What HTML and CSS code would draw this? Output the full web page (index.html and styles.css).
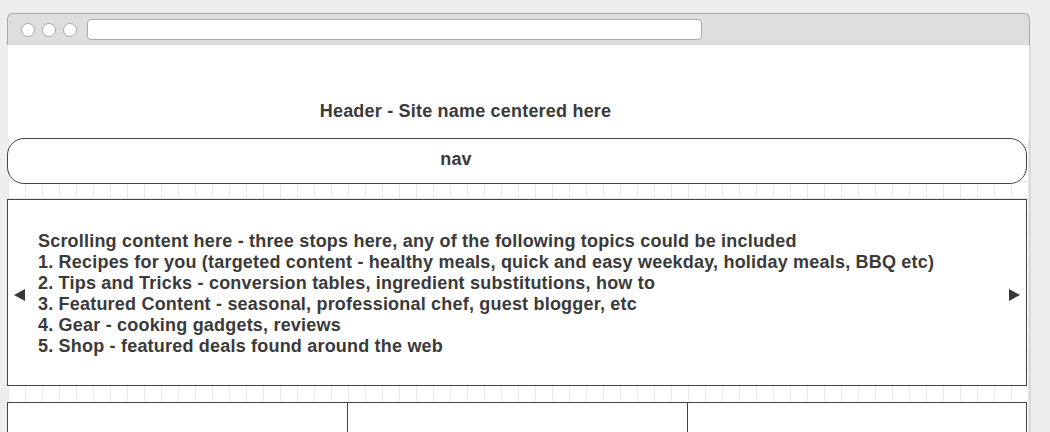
FILE: index.html
```html
<!DOCTYPE html>
<html>
<head>
<meta charset="utf-8">
<link rel="stylesheet" href="styles.css">
</head>
<body>
<div class="window">
  <div class="titlebar">
    <span class="dot"></span><span class="dot"></span><span class="dot"></span>
    <div class="address"></div>
  </div>
  <div class="page">
    <header class="site-header">Header - Site name centered here</header>
    <nav class="nav">nav</nav>
    <section class="carousel">
      <span class="arrow arrow-left"></span>
      <div class="slide">
        Scrolling content here - three stops here, any of the following topics could be included<br>
        1. Recipes for you (targeted content - healthy meals, quick and easy weekday, holiday meals, BBQ etc)<br>
        2. Tips and Tricks - conversion tables, ingredient substitutions, how to<br>
        3. Featured Content - seasonal, professional chef, guest blogger, etc<br>
        4. Gear - cooking gadgets, reviews<br>
        5. Shop - featured deals found around the web
      </div>
      <span class="arrow arrow-right"></span>
    </section>
    <section class="columns">
      <div class="col"></div>
      <div class="col"></div>
      <div class="col"></div>
    </section>
  </div>
</div>
</body>
</html>
```
FILE: styles.css
```css
html, body {
  margin: 0;
  padding: 0;
  background: #eeeeee;
  overflow: hidden;
  height: 432px;
}
body {
  font-family: "Liberation Sans", Arial, sans-serif;
  color: #3a3a3a;
}
.window {
  margin: 13px 0 0 7px;
  width: 1023px;
}
.titlebar {
  background: #dedede;
  border: 1px solid #a8a8a8;
  border-bottom: none;
  border-radius: 6px 6px 0 0;
  display: flex;
  align-items: center;
  padding-left: 13px;
  box-sizing: border-box;
  height: 32px;
}
.dot {
  width: 12px;
  height: 12px;
  border-radius: 50%;
  background: #fff;
  border: 1px solid #aaaaaa;
  margin-right: 7px;
  flex: none;
}
.address {
  margin-left: 3px;
  width: 613px;
  height: 19px;
  background: #fff;
  border: 1px solid #aaaaaa;
  border-radius: 4px;
  margin-top: -1px;
}
.page {
  width: 1021px;
  height: 400px;
  margin-left: 1px;
  border-right: 2px solid #dadada;
  background-color: #ffffff;
  background-image:
    linear-gradient(to right, #e9e9e9 1px, transparent 1px),
    linear-gradient(to bottom, #e9e9e9 1px, transparent 1px);
  background-size: 17px 17px;
  background-position: 0 0;
}
.site-header {
  height: 93px;
  background: #fff;
  box-sizing: border-box;
  padding: 55px 106px 0 0;
  text-align: center;
  font-weight: bold;
  font-size: 18px;
  letter-spacing: 0.2px;
  line-height: 22px;
}
.nav {
  height: 46px;
  box-sizing: border-box;
  width: 1020px;
  margin-left: -1px;
  border: 1px solid #444;
  border-radius: 17px;
  background: #fff;
  text-align: center;
  font-weight: bold;
  font-size: 18px;
  letter-spacing: 0.2px;
  line-height: 40px;
  padding-right: 122px;
}
.carousel {
  margin-top: 15px;
  margin-left: -1px;
  width: 1020px;
  height: 187px;
  box-sizing: border-box;
  border: 1px solid #444;
  background: #fff;
  display: flex;
  align-items: center;
}
.slide {
  flex: 1;
  font-weight: bold;
  font-size: 18px;
  letter-spacing: 0.2px;
  line-height: 21px;
  padding-left: 13px;
  padding-top: 2px;
}
.arrow {
  width: 0;
  height: 0;
  border-top: 6px solid transparent;
  border-bottom: 6px solid transparent;
  flex: none;
  margin-top: 4px;
}
.arrow-left {
  border-right: 11px solid #383838;
  margin-left: 6px;
}
.arrow-right {
  border-left: 11px solid #383838;
  margin-right: 6px;
}
.columns {
  margin-top: 16px;
  margin-left: -1px;
  width: 1020px;
  display: grid;
  grid-template-columns: 340px 340px 340px;
  height: 60px;
}
.col {
  background: #fff;
  border: 1px solid #444;
  border-right: none;
}
.col:last-child {
  border-right: 1px solid #444;
}
```
